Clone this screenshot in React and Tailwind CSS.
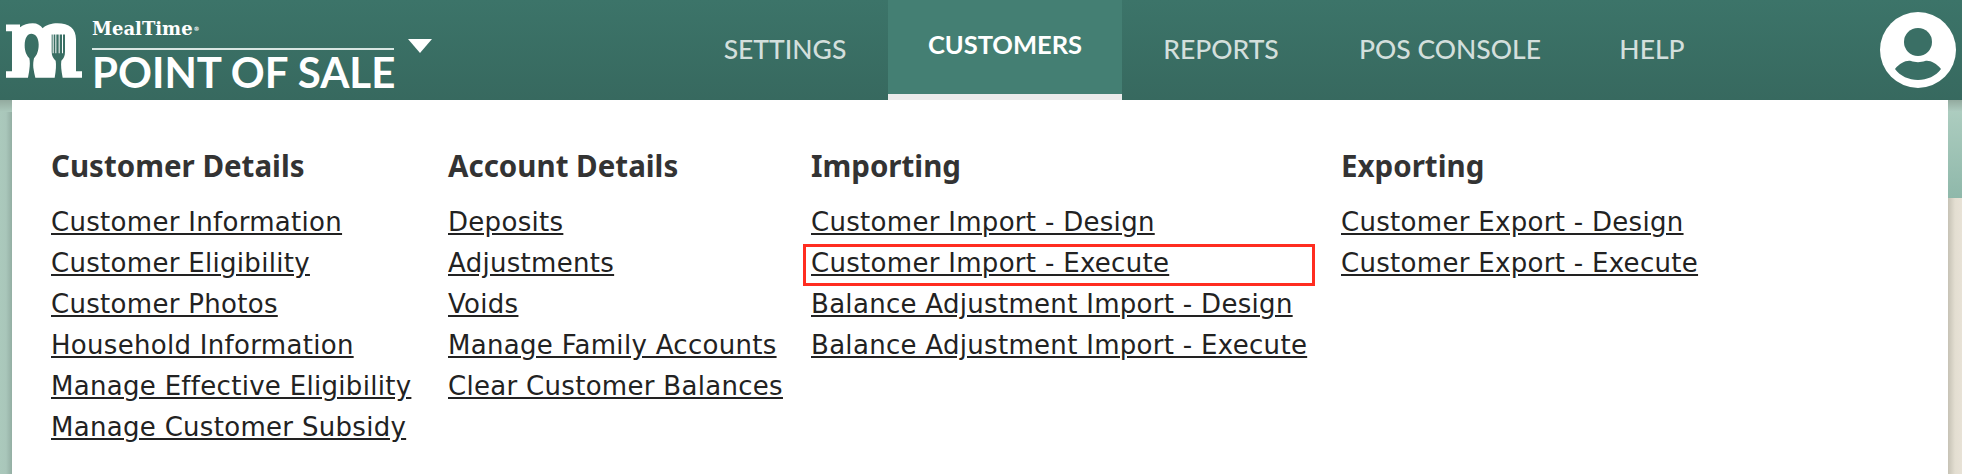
import React from 'react';

const navItems = [
  { label: 'SETTINGS', width: 'w-[206px]' },
  { label: 'CUSTOMERS', width: 'w-[234px]' },
  { label: 'REPORTS', width: 'w-[198px]' },
  { label: 'POS CONSOLE', width: 'w-[260px]' },
  { label: 'HELP', width: 'w-[144px]' },
];

const columns = [
  {
    title: 'Customer Details',
    width: 'w-[397px]',
    links: [
      'Customer Information',
      'Customer Eligibility',
      'Customer Photos',
      'Household Information',
      'Manage Effective Eligibility',
      'Manage Customer Subsidy',
    ],
  },
  {
    title: 'Account Details',
    width: 'w-[363px]',
    links: ['Deposits', 'Adjustments', 'Voids', 'Manage Family Accounts', 'Clear Customer Balances'],
  },
  {
    title: 'Importing',
    width: 'w-[530px]',
    links: [
      'Customer Import - Design',
      'Customer Import - Execute',
      'Balance Adjustment Import - Design',
      'Balance Adjustment Import - Execute',
    ],
  },
  {
    title: 'Exporting',
    width: 'w-[400px]',
    links: ['Customer Export - Design', 'Customer Export - Execute'],
  },
];

const MLogo = () => (
  <svg viewBox="18 26 228 164" className="w-[76px] h-[55px] shrink-0" fill="#fff">
    <path
      fillRule="evenodd"
      d="M18 30H60V38C70 30 84 26 98 26C112 26 122 32 128 41C138 31 155 26 172 26C208 26 228 42 228 74V170H246V190H18V170H36V50H18ZM94 58C82 58 74 72 74 92C74 112 81 124 88 131C90 141 90 151 88 165C87 175 85 183 84 190H106C104 180 101 170 100 160C99 148 100 140 102 131C110 123 116 110 116 90C116 70 106 58 94 58ZM155 60V112C155 125 160 133 167 139C169 151 168 168 164 190H188C184 170 182 151 184 139C191 133 195 125 195 112V60H189V116H186V60H179V116H176V60H169V116H166V60H161V116H158V60Z"
    />
  </svg>
);

const App = () => (
  <div className="h-[474px] w-full flex flex-col font-['DejaVu_Sans',sans-serif] overflow-hidden">
    <header className="h-[100px] shrink-0 flex items-stretch bg-gradient-to-b from-[#3c7469] to-[#37695f]">
      <div className="w-[682px] shrink-0 flex items-start pl-[6px] pt-[23px]">
        <MLogo />
        <div className="ml-[10px] w-[302px] -mt-[8px] font-['Lato',sans-serif] text-white">
          <div className="h-[27px] text-[18px] leading-[27px] font-bold font-['DejaVu_Serif',serif] whitespace-nowrap">
            MealTime<span className="text-[6px] align-top ml-[1px]">®</span>
          </div>
          <div className="h-[2px] mt-[6px] bg-[#d8e6e2]" />
          <div className="text-[42px] leading-[44px] font-bold whitespace-nowrap">POINT OF SALE</div>
        </div>
        <svg viewBox="0 0 24 14" className="w-[24px] h-[14px] ml-[14px] mt-[16px]" fill="#fff">
          <path d="M0 0H24L12 14Z" />
        </svg>
      </div>
      <nav className="flex items-stretch font-['Lato',sans-serif]">
        {navItems.map((item) => {
          const active = item.label === 'CUSTOMERS';
          return (
            <a
              key={item.label}
              className={
                active
                  ? 'w-[234px] flex items-center justify-center pb-[6px] bg-[#447f73] border-b-[6px] border-[#ebebeb] text-white text-[25.5px] font-bold whitespace-nowrap'
                  : `${item.width} flex items-center justify-center text-[26.5px] font-medium text-[#d3dfdc] whitespace-nowrap`
              }
            >
              {item.label}
            </a>
          );
        })}
      </nav>
      <div className="ml-auto flex items-center pr-[6px]">
        <svg viewBox="0 0 76 76" className="w-[76px] h-[76px]">
          <circle cx="38" cy="38" r="38" fill="#fff" />
          <circle cx="38" cy="30" r="14" fill="#3a6f65" />
          <path d="M15 57C20 51 26 48 31 49C35 50.500 41 50.500 45 49C50 48 56 51 61 57C56 64 47 68 38 68C29 68 20 64 15 57Z" fill="#3a6f65" />
        </svg>
      </div>
    </header>
    <div className="flex-1 flex">
      <div className="w-[12px] bg-gradient-to-r from-[#abc9bc] via-[#a9c6ba] to-[#93aea3]">
        <div className="h-[12px] bg-gradient-to-b from-[#93aa9f] to-[#abc9bc]" />
      </div>
      <main className="flex-1 bg-white flex pl-[39px] pt-[49px]">
        {columns.map((col) => (
          <section key={col.title} className={col.width}>
            <h3 className="font-['Noto_Sans',sans-serif] text-[29.5px] leading-[34px] font-bold text-[#333] mb-[19px] whitespace-nowrap">{col.title}</h3>
            <ul className="text-[#222] text-[26px] tracking-[0.3px] leading-[41px]">
              {col.links.map((link) => (
                <li key={link} className="relative whitespace-nowrap">
                  <a className="underline">{link}</a>
                  {link === 'Customer Import - Execute' && (
                    <span className="absolute left-[-8px] top-[1px] w-[512px] h-[42px] border-[3px] border-[#ff2d20]" />
                  )}
                </li>
              ))}
            </ul>
          </section>
        ))}
      </main>
      <div className="w-[14px] flex flex-col">
        <div className="h-[98px] bg-gradient-to-b from-[#b0cfc2] to-[#8fb8aa]">
          <div className="h-[12px] bg-gradient-to-b from-[#93aa9f] to-[#aecdc1]" />
        </div>
        <div className="flex-1 bg-gradient-to-r from-[#c6c2b5] via-[#e3ded1] to-[#e8e2d6]" />
      </div>
    </div>
  </div>
);

export default App;
